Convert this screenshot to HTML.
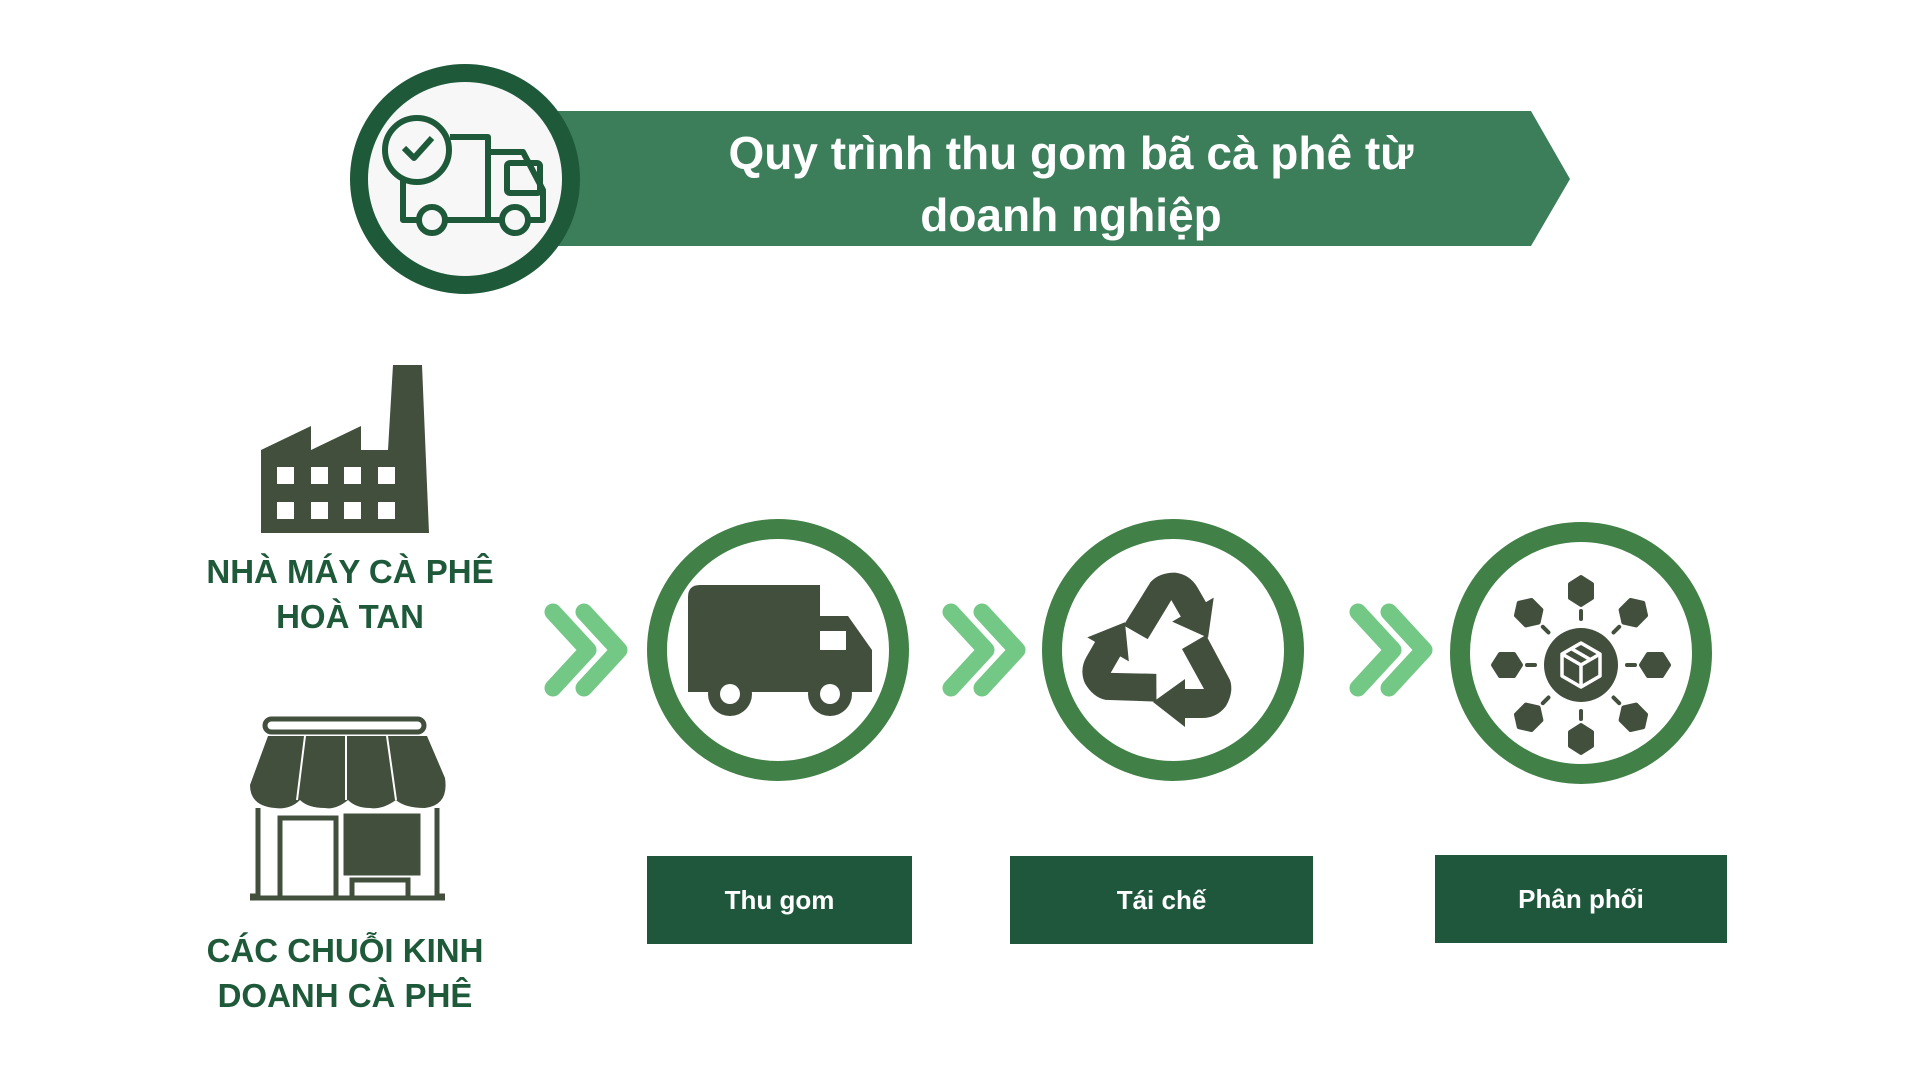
<!DOCTYPE html>
<html><head><meta charset="utf-8"><style>
html,body{margin:0;padding:0;background:#fff;width:1920px;height:1080px;overflow:hidden;position:relative;font-family:"Liberation Sans","DejaVu Sans",sans-serif}
.t{position:absolute;text-align:center;font-weight:bold;white-space:nowrap}
.lbl{color:#1e5a3a;font-size:33px;line-height:45px}
.btn{position:absolute;background:#1e573b;color:#fff;font-weight:bold;font-size:26px;display:flex;align-items:center;justify-content:center}
</style></head><body>
<svg width="1920" height="1080" style="position:absolute;left:0;top:0">
<polygon points="540,111 1531,111 1570,179 1531,246 540,246" fill="#3c7d5a"/>
<circle cx="465" cy="179" r="115" fill="#1e5a3a"/>
<circle cx="465" cy="179" r="97" fill="#f7f7f7"/>
<g fill="none" stroke="#1e5a3a" stroke-width="6" stroke-linejoin="round">
<path d="M403 180 V220 H418 M446 220 H501 M529 220 H543 V190 L523 152 H488 V137 H450"/>
<path d="M488 152 V220"/>
<rect x="507" y="163" width="33" height="30" rx="3"/>
<circle cx="417" cy="150" r="32" fill="#f7f7f7"/>
<path d="M404 148 L414 158 L432 138"/>
<circle cx="432" cy="220" r="13" fill="#f7f7f7"/>
<circle cx="515" cy="220" r="13" fill="#f7f7f7"/>
</g>
<path d="M261 450 L311 426 V450 L361 426 V450 L388 450 L393 365 H422 L429 533 H261 Z" fill="#424f3d"/>
<g fill="#fff">
<rect x="277" y="467" width="17" height="17"/><rect x="311" y="467" width="17" height="17"/><rect x="344" y="467" width="17" height="17"/><rect x="378" y="467" width="17" height="17"/>
<rect x="277" y="502" width="17" height="17"/><rect x="311" y="502" width="17" height="17"/><rect x="344" y="502" width="17" height="17"/><rect x="378" y="502" width="17" height="17"/>
</g>
<g fill="none" stroke="#424f3d" stroke-width="5">
<rect x="265" y="719" width="159" height="13" rx="6.5"/>
<path d="M258 808 V896 H250 M437 808 V896 H445 M250 898 H445"/>
<rect x="280" y="818" width="56" height="80"/>
<rect x="346" y="816" width="72" height="57" fill="#424f3d"/>
<rect x="352" y="880" width="56" height="18"/>
</g>
<path d="M268 736 H427 L445 778 Q449 805 425 808 Q405 808 396 800 Q382 810 370 808 Q356 808 348 800 Q336 810 325 808 Q308 808 300 800 Q290 810 275 808 Q250 806 250 785 Z" fill="#424f3d"/>
<g stroke="#fff" stroke-width="2"><line x1="305" y1="736" x2="297" y2="800"/><line x1="346" y1="736" x2="346" y2="800"/><line x1="387" y1="736" x2="396" y2="800"/></g>
<g fill="none" stroke="#74c886" stroke-width="17" stroke-linecap="round" stroke-linejoin="round">
<path d="M553 612 L588 650 L553 688 M584 612 L619 650 L584 688"/>
<path d="M951 612 L986 650 L951 688 M982 612 L1017 650 L982 688"/>
<path d="M1358 612 L1393 650 L1358 688 M1389 612 L1424 650 L1389 688"/>
</g>
<g fill="none" stroke="#418147" stroke-width="20">
<circle cx="778" cy="650" r="121"/><circle cx="1173" cy="650" r="121"/><circle cx="1581" cy="653" r="121"/>
</g>
<g fill="#424f3d">
<path d="M700 585 H820 V692 H688 V597 Q688 585 700 585Z"/>
<path d="M820 616 H848 L872 650 V692 H820Z"/>
<circle cx="730" cy="694" r="22"/><circle cx="830" cy="694" r="22"/>
</g>
<rect x="820" y="631" width="26" height="19" fill="#fff"/>
<circle cx="730" cy="694" r="10" fill="#fff"/><circle cx="830" cy="694" r="10" fill="#fff"/>
<g transform="translate(1162,654)" fill="#424f3d">
<path id="ar" d="M-9 48 L23 25 L23 35 L42 35 L20 -5 L44 -19 L68 26 Q72 38 64 52 Q55 64 40 64 L23 64 L23 73 Z"/>
<use href="#ar" transform="rotate(120)"/>
<use href="#ar" transform="rotate(240)"/>
</g>
<g transform="translate(1581,665)">
<circle r="37" fill="#424f3d"/>
<g fill="none" stroke="#fff" stroke-width="3.5" stroke-linejoin="round">
<path d="M0 -22 L19 -11 V11 L0 22 L-19 11 V-11 Z M-19 -11 L0 0 L19 -11 M0 0 V22 M-9 -16 L10 -5"/>
</g>
<g fill="#424f3d" stroke="#424f3d" stroke-width="4" stroke-linecap="round">
<g id="sp"><line x1="0" y1="-46" x2="0" y2="-54"/><polygon points="0,-88 11,-81 11,-67 0,-60 -11,-67 -11,-81" stroke-linejoin="round"/></g>
<use href="#sp" transform="rotate(45)"/><use href="#sp" transform="rotate(90)"/><use href="#sp" transform="rotate(135)"/>
<use href="#sp" transform="rotate(180)"/><use href="#sp" transform="rotate(225)"/><use href="#sp" transform="rotate(270)"/><use href="#sp" transform="rotate(315)"/>
</g>
</g>
</svg>
<div class="t" style="left:571px;top:122px;width:1000px;color:#fff;font-size:46px;line-height:62px">Quy trình thu gom bã cà phê từ<br>doanh nghiệp</div>
<div class="t lbl" style="left:150px;top:549px;width:400px">NHÀ MÁY CÀ PHÊ<br>HOÀ TAN</div>
<div class="t lbl" style="left:145px;top:928px;width:400px">CÁC CHUỖI KINH<br>DOANH CÀ PHÊ</div>
<div class="btn" style="left:647px;top:856px;width:265px;height:88px">Thu gom</div>
<div class="btn" style="left:1010px;top:856px;width:303px;height:88px">Tái chế</div>
<div class="btn" style="left:1435px;top:855px;width:292px;height:88px">Phân phối</div>
</body></html>
